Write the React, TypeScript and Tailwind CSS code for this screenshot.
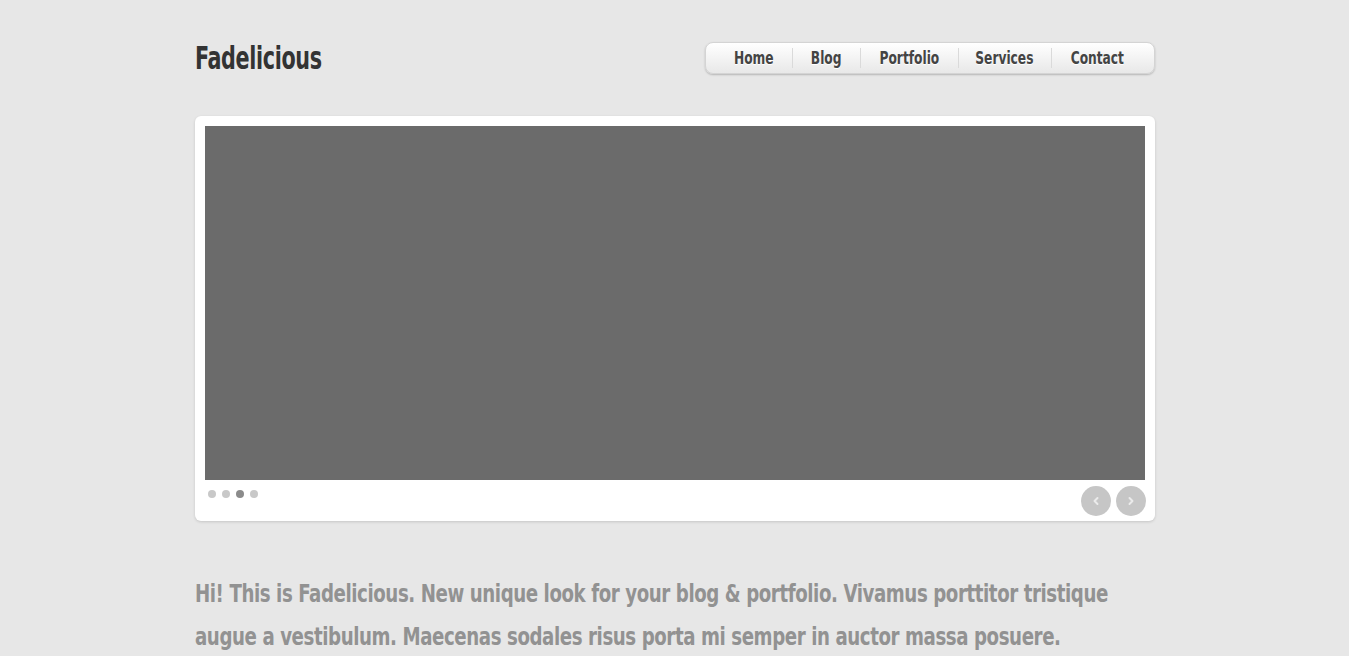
import { ChevronLeft, ChevronRight } from 'lucide-react';

const navItems = [
  { label: 'Home', w: 'w-[86px] pl-[10px]' },
  { label: 'Blog', w: 'w-[68px]' },
  { label: 'Portfolio', w: 'w-[98px]' },
  { label: 'Services', w: 'w-[93px]' },
  { label: 'Contact', w: 'flex-1 pr-[10px]' },
];

const intro = [
  'Hi! This is Fadelicious. New unique look for your blog & portfolio. Vivamus porttitor tristique',
  'augue a vestibulum. Maecenas sodales risus porta mi semper in auctor massa posuere.',
];

export default function App() {
  return (
    <div className="min-h-[656px] bg-[#e7e7e7] font-['DejaVu_Sans_Condensed','DejaVu_Sans',sans-serif] font-stretch-condensed">
      <div className="w-[960px] mx-auto pt-[42px]">
        {/* Header */}
        <header className="flex items-center justify-between h-[32px]">
          <h1 className="text-[32px] font-bold text-[#333] tracking-[-0.5px] leading-none scale-x-[0.72] origin-left">
            Fadelicious
          </h1>
          <nav className="flex items-center h-[32px] w-[450px] rounded-[8px] bg-gradient-to-b from-white to-[#e8e8e8] border border-[#d4d4d4] shadow-[0_1px_2px_rgba(0,0,0,0.22)]">
            {navItems.map((item, i) => (
              <a
                key={item.label}
                className={
                  'flex justify-center text-[17px] font-bold text-[#444] leading-[20px] [text-shadow:0_1px_0_#fff] ' +
                  item.w +
                  (i > 0 ? ' border-l border-[#dadada]' : '')
                }
              >
                <span className="inline-block scale-x-[0.8]">{item.label}</span>
              </a>
            ))}
          </nav>
        </header>

        {/* Slider */}
        <div className="mt-[42px] bg-white rounded-[6px] p-[10px] pb-0 h-[405px] shadow-[0_1px_3px_rgba(0,0,0,0.15)]">
          <div className="h-[354px] bg-[#6b6b6b]" />
          <div className="flex items-start justify-between pt-[6px]">
            <div className="flex gap-[6px] pl-[3px] mt-[4px]">
              <span className="w-[8px] h-[8px] rounded-full bg-[#c8c8c8]" />
              <span className="w-[8px] h-[8px] rounded-full bg-[#c8c8c8]" />
              <span className="w-[8px] h-[8px] rounded-full bg-[#8b8b8b]" />
              <span className="w-[8px] h-[8px] rounded-full bg-[#c8c8c8]" />
            </div>
            <div className="flex gap-[5px] -mr-[1px]">
              <button className="w-[30px] h-[30px] rounded-full bg-[#c6c6c6] flex items-center justify-center text-[#ebebeb]">
                <ChevronLeft size={12} strokeWidth={4} />
              </button>
              <button className="w-[30px] h-[30px] rounded-full bg-[#c6c6c6] flex items-center justify-center text-[#ebebeb]">
                <ChevronRight size={12} strokeWidth={4} />
              </button>
            </div>
          </div>
        </div>

        {/* Intro */}
        <div className="mt-[52px] text-[24px] font-bold text-[#929292] leading-[43px] tracking-[-0.5px]">
          {intro.map((line) => (
            <p key={line} className="whitespace-nowrap w-max scale-x-[0.843] origin-left">
              {line}
            </p>
          ))}
        </div>
      </div>
    </div>
  );
}
